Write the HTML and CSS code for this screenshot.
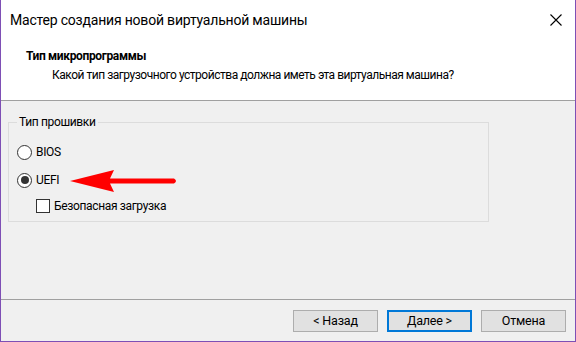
FILE: index.html
```html
<html>
  <head>
    <title>Мастер создания новой виртуальной машины</title>
    <link rel="stylesheet" href="styles.css">
  </head>

  <body>
    <div class="window">
      <div class="header">
        <div class="title-bar">
          <span class="title">Мастер создания новой виртуальной машины</span>
          <svg class="close" width="14" height="14" viewBox="0 0 14 14">
            <path d="M1.5 1.5 L12.5 12.5 M12.5 1.5 L1.5 12.5" stroke="#000" stroke-width="1.1" fill="none" />
          </svg>
        </div>
        <div class="heading">Тип микропрограммы</div>
        <div class="subheading">Какой тип загрузочного устройства должна иметь эта виртуальная машина?</div>
      </div>

      <div class="content">
        <fieldset class="group">
          <legend>Тип прошивки</legend>
          <div class="option">
            <span class="radio"></span>
            <span>BIOS</span>
          </div>
          <div class="option">
            <span class="radio checked"></span>
            <span>UEFI</span>
          </div>
          <div class="option sub">
            <span class="checkbox"></span>
            <span>Безопасная загрузка</span>
          </div>
        </fieldset>

        <!-- red pointer drawn over the dialog -->
        <svg class="arrow" width="110" height="26" viewBox="0 0 110 26">
          <path d="M0 13 L44 2 L40 10.5 L104 10.5 Q108 13 104 15.5 L40 15.5 L44 24 Z" fill="#ff0000" />
        </svg>
      </div>

      <div class="footer">
        <button class="btn">&lt; Назад</button>
        <button class="btn default">Далее &gt;</button>
        <button class="btn">Отмена</button>
      </div>
    </div>
  </body>
</html>
```

FILE: styles.css
```css
body,
html {
  margin: 0;
  padding: 0;
  background-color: #f0f0f0;
  font-family: Roboto, "Noto Sans", sans-serif;
  font-size: 12px;
  letter-spacing: -0.35px;
  color: #000;
}

.window {
  width: 576px;
  height: 342px;
  box-sizing: border-box;
  border: 1px solid #7e4fb5;
  border-top: 0;
  display: flex;
  flex-direction: column;
}

.header {
  background: #fff;
  height: 100px;
  border-bottom: 1px solid #a0a0a0;
  flex-shrink: 0;
}

.title-bar {
  height: 40px;
  display: flex;
  align-items: center;
  justify-content: space-between;
  padding: 0 12px 0 9px;
}

.title {
  font-size: 14px;
  letter-spacing: -0.2px;
}

.heading {
  font-weight: bold;
  padding-left: 25px;
  margin-top: 7px;
  line-height: 18px;
}

.subheading {
  padding-left: 51px;
  margin-top: 1px;
  line-height: 18px;
  letter-spacing: -0.48px;
}

.content {
  flex: 1;
  position: relative;
  padding: 14px 86px 0 7px;
}

.group {
  margin: 0;
  padding: 9px 8px 6px 8px;
  border: 1px solid #dcdcdc;
  height: 107px;
  box-sizing: border-box;
}

.group legend {
  padding: 0 2px;
  margin-left: 0;
}

.option {
  display: flex;
  align-items: center;
  gap: 4px;
  height: 28px;
}

.option.sub {
  padding-left: 19px;
  height: 24px;
}

.radio {
  width: 15px;
  height: 15px;
  box-sizing: border-box;
  border: 1px solid #333;
  border-radius: 50%;
  background: #fff;
  display: flex;
  align-items: center;
  justify-content: center;
}

.radio.checked::after {
  content: "";
  width: 8px;
  height: 8px;
  border-radius: 50%;
  background: #333;
}

.checkbox {
  width: 14px;
  height: 14px;
  box-sizing: border-box;
  border: 1px solid #333;
  background: #fff;
}

.arrow {
  position: absolute;
  left: 69px;
  top: 67px;
}

.footer {
  height: 41px;
  border-top: 1px solid #a0a0a0;
  display: flex;
  justify-content: flex-end;
  align-items: center;
  gap: 9px;
  padding-right: 9px;
  flex-shrink: 0;
}

.btn {
  width: 85px;
  height: 22px;
  background: #e1e1e1;
  border: 1px solid #adadad;
  font-family: Roboto, "Noto Sans", sans-serif;
  font-size: 12.5px;
  letter-spacing: -0.2px;
  color: #000;
  padding: 0;
}

.btn.default {
  border: 2px solid #0078d7;
}
```
